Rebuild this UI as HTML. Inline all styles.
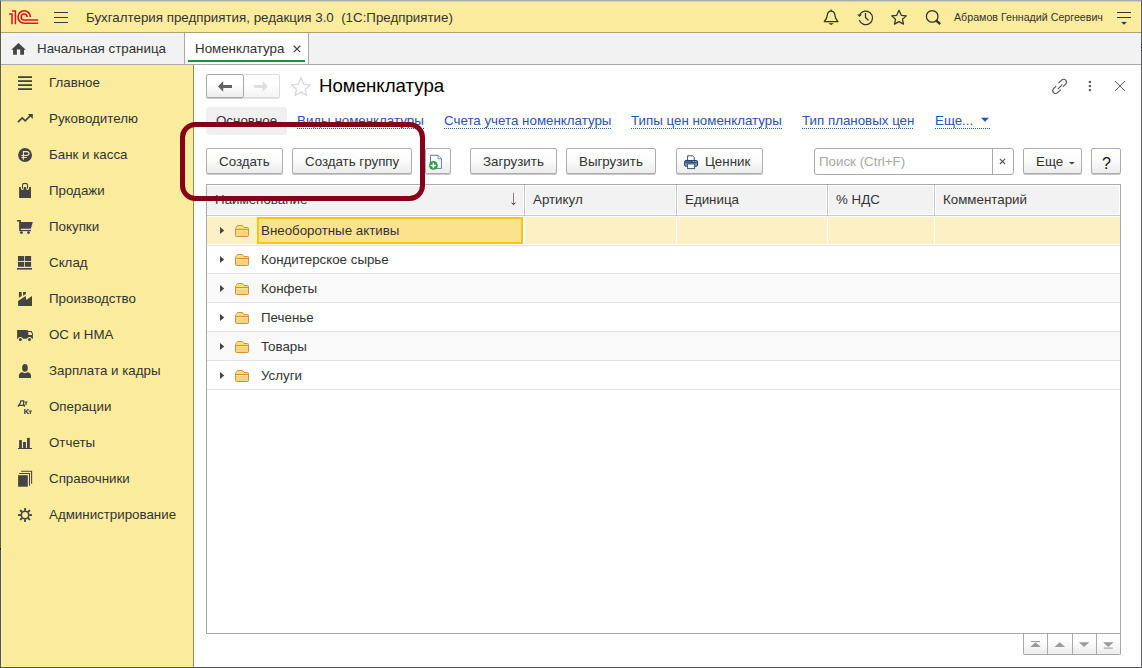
<!DOCTYPE html>
<html><head><meta charset="utf-8">
<style>
*{box-sizing:border-box;margin:0;padding:0}
html,body{width:1142px;height:668px;overflow:hidden;background:#fff}
body{font-family:"Liberation Sans",sans-serif;font-size:13.333px;color:#333;position:relative}
.a{position:absolute}
.t{position:absolute;white-space:pre;line-height:16px;padding-top:1px}
#frame{position:absolute;left:0;top:0;width:1142px;height:668px;border-top:1px solid #aaaaaa;border-left:1px solid #5b5950;border-right:1px solid #606168;border-bottom:1px solid #505054;pointer-events:none;z-index:50}
#hdr{position:absolute;left:0;top:0;width:1142px;height:33px;background:#fbec9d;border-bottom:1px solid #ada170}
#tabs{position:absolute;left:0;top:33px;width:1142px;height:32px;background:#f2f2f2;border-bottom:1px solid #a9a9a9}
#side{position:absolute;left:0;top:65px;width:194px;height:603px;background:#fbec9d;border-right:1px solid #978d60}
.btn{position:absolute;top:148px;height:26px;border:1px solid #adadad;border-radius:2px;background:linear-gradient(#fff 0%,#fdfdfd 40%,#ececec 100%);box-shadow:0 1px 0 #c9c9c9}
.lnk{position:absolute;top:112px;white-space:pre;line-height:16px;padding-top:1px;color:#2853b8;background-image:linear-gradient(to right,#2853b8 50%,transparent 50%);background-size:2px 1px;background-repeat:repeat-x;background-position:0 16px;height:17px}
.hc{position:absolute;top:185px;height:30px;background:#f2f2f2;border-left:1px solid #fff;border-right:1px solid #fff;border-top:1px solid #fff;border-bottom:1px solid #fff}
.sep{position:absolute;top:185px;width:1px;height:30px;background:#cbcbcb}
.rowline{position:absolute;left:207px;width:913px;height:1px;background:#e2e2e2}
.ic{position:absolute}
</style></head><body>
<!-- HEADER -->
<div id="hdr">
  <svg class="a" style="left:0;top:0" width="44" height="33" viewBox="0 0 44 33">
    <g fill="none" stroke="#d9141d" stroke-width="1.55" stroke-linejoin="miter">
      <path d="M9.2 13.9H12V24.2M12 10.9H15.4V24.2"/>
      <path d="M30.4 17A6.2 6.2 0 1 0 24.2 23.2H38.2"/>
      <path d="M27.2 17A3 3 0 1 0 24.2 20H38.2"/>
    </g>
  </svg>
  <div class="a" style="left:54px;top:12px;width:14px;height:1.4px;background:#3a3a3a"></div>
  <div class="a" style="left:54px;top:17px;width:14px;height:1.4px;background:#3a3a3a"></div>
  <div class="a" style="left:54px;top:22px;width:14px;height:1.4px;background:#3a3a3a"></div>
  <div class="t" style="left:86px;top:9px">Бухгалтерия предприятия, редакция 3.0  (1С:Предприятие)</div>
  <!-- bell -->
  <svg class="a" style="left:820px;top:6px" width="22" height="22" viewBox="0 0 22 22">
    <g fill="none" stroke="#333" stroke-width="1.25">
      <path d="M4.3 15.5C6.3 13.6 7 12 7.2 9.6C7.5 6.6 9 5.2 11.1 5.2C13.2 5.2 14.7 6.6 15 9.6C15.2 12 15.9 13.6 17.9 15.5Z" stroke-linejoin="round"/>
      <path d="M11.1 3.6V5.2"/>
    </g>
    <path d="M8.3 17.3H13.9L11.1 19.1Z" fill="#333"/>
  </svg>
  <!-- history -->
  <svg class="a" style="left:854px;top:6px" width="22" height="22" viewBox="0 0 22 22">
    <g fill="none" stroke="#333" stroke-width="1.25">
      <path d="M5.3 14.1A6.8 6.8 0 1 0 5.6 8.9"/>
      <path d="M11.5 7.1V11.5L14.5 14.5"/>
    </g>
    <path d="M3.1 8.4H7.9L5.5 11Z" fill="#333"/>
  </svg>
  <!-- star -->
  <svg class="a" style="left:888px;top:6px" width="22" height="22" viewBox="0 0 22 22">
    <path d="M11 4.3L13.3 9.3L18.3 9.9L14.5 13.3L15.5 18.1L11 15.6L6.5 18.1L7.5 13.3L3.7 9.9L8.7 9.3Z" fill="none" stroke="#333" stroke-width="1.25" stroke-linejoin="round"/>
  </svg>
  <!-- search -->
  <svg class="a" style="left:922px;top:6px" width="22" height="22" viewBox="0 0 22 22">
    <circle cx="10.2" cy="10.4" r="5.8" fill="none" stroke="#333" stroke-width="1.3"/>
    <path d="M14.4 14.6L18.2 18.2" stroke="#333" stroke-width="2.4"/>
  </svg>
  <div class="t" style="left:954px;top:8px;font-size:10.667px">Абрамов Геннадий Сергеевич</div>
  <div class="a" style="left:1117px;top:12px;width:14px;height:1.4px;background:#333"></div>
  <div class="a" style="left:1117px;top:17px;width:14px;height:1.4px;background:#333"></div>
  <svg class="a" style="left:1120px;top:21px" width="8" height="5" viewBox="0 0 8 5"><path d="M1.2 1H6.9L4 3.8Z" fill="#333"/></svg>
</div>
<!-- TABS -->
<div id="tabs">
  <svg class="a" style="left:0;top:0" width="32" height="31" viewBox="0 0 32 31">
    <path d="M11.3 16.7L18.45 9.9L25.8 16.7H24V21.8H20.2V16.4H16.9V21.8H13.1V16.7Z" fill="#444"/>
  </svg>
  <div class="t" style="left:37px;top:7px">Начальная страница</div>
  <div class="a" style="left:184px;top:0;width:125px;height:31px;background:#fff;border-left:1px solid #a9a9a9;border-right:1px solid #a9a9a9"></div>
  <div class="t" style="left:195px;top:7px">Номенклатура</div>
  <svg class="a" style="left:292px;top:11px" width="10" height="10" viewBox="0 0 10 10"><path d="M1.7 1.7L8.2 8.1M8.2 1.7L1.7 8.1" stroke="#444" stroke-width="1.2"/></svg>
  <div class="a" style="left:188px;top:27px;width:117px;height:2px;background:#0b9a3c"></div>
</div>
<!-- SIDEBAR -->
<div id="side">
</div>
<div class="t" style="left:49px;top:74px">Главное</div>
<div class="t" style="left:49px;top:110px">Руководителю</div>
<div class="t" style="left:49px;top:146px">Банк и касса</div>
<div class="t" style="left:49px;top:182px">Продажи</div>
<div class="t" style="left:49px;top:218px">Покупки</div>
<div class="t" style="left:49px;top:254px">Склад</div>
<div class="t" style="left:49px;top:290px">Производство</div>
<div class="t" style="left:49px;top:326px">ОС и НМА</div>
<div class="t" style="left:49px;top:362px">Зарплата и кадры</div>
<div class="t" style="left:49px;top:398px">Операции</div>
<div class="t" style="left:49px;top:434px">Отчеты</div>
<div class="t" style="left:49px;top:470px">Справочники</div>
<div class="t" style="left:49px;top:506px">Администрирование</div>
<svg class="a" style="left:0;top:65px" width="193" height="470" viewBox="0 65 193 470">
  <g fill="#444">
    <!-- Главное -->
    <rect x="18" y="76.2" width="14" height="1.8"/><rect x="18" y="80.2" width="14" height="1.8"/><rect x="18" y="84.2" width="14" height="1.8"/><rect x="18" y="88.2" width="14" height="1.8"/>
    <!-- ruble -->
    <circle cx="25.05" cy="155.05" r="6.95"/>
    <!-- bag -->
    <path d="M19.1 187.1H20.8V188C20.8 189.3 21.6 190 22.5 190C23.4 190 23.9 189.3 23.9 188V187.1H26.1V188C26.1 189.3 26.6 190 27.5 190C28.4 190 29.2 189.3 29.2 188V187.1H31V198H19.1Z"/>
    <!-- cart -->
    <rect x="17.1" y="220" width="3.6" height="1.6"/><rect x="19.3" y="220" width="1.5" height="11"/><path d="M19.3 222.1H32.8L30.9 228.7H19.3Z"/><rect x="19.3" y="229.9" width="11.7" height="1.2"/>
    <circle cx="21.4" cy="232.6" r="1.45"/><circle cx="28.5" cy="232.6" r="1.45"/>
    <!-- grid -->
    <rect x="18" y="256" width="6.2" height="5.1"/><rect x="25" y="256" width="6.1" height="5.1"/>
    <rect x="18" y="262" width="6.2" height="4.8"/><rect x="25" y="262" width="6.1" height="4.8"/>
    <rect x="17" y="268" width="15" height="1.6"/>
    <!-- factory -->
    <path d="M18.1 300.9L25.7 296.1L26.2 300L32 296.1V306H18.1Z"/>
    <path d="M18.9 292.1H21.7V296.1L18.9 297.7Z"/><path d="M23.05 292.1H25.9V294L23.05 295.7Z"/>
    <!-- truck -->
    <path d="M17.1 330.1H27.7V331.1H31.6L32.9 333.3V338.7H17.1Z"/>
    <!-- person -->
    <ellipse cx="24.95" cy="367.9" rx="2.85" ry="3.8"/>
    <path d="M18.9 378V375.5C18.9 373.6 20.3 372.3 22.3 372.3L24.95 373.2L27.6 372.3C29.6 372.3 31 373.6 31 375.5V378Z"/>
    <!-- reports -->
    <rect x="19.1" y="440.1" width="2.8" height="8"/><rect x="23.05" y="442" width="2.85" height="6"/><rect x="27" y="437.9" width="2.8" height="10.1"/>
    <rect x="18" y="448" width="14" height="1"/>
    <!-- справочники -->
    <rect x="18.1" y="475.2" width="9.7" height="11.5"/>
  </g>
  <g fill="#fbec9d">
    <path d="M28.3 332.1H30.9L32 334V334.9H28.3Z"/>
    <circle cx="20.4" cy="339.5" r="2.5"/><circle cx="29.5" cy="339.5" r="2.5"/>
  </g>
  <g fill="#444"><circle cx="20.4" cy="339.5" r="1.5"/><circle cx="29.5" cy="339.5" r="1.5"/></g>
  <g fill="none" stroke="#fbec9d" stroke-width="1.1">
    <path d="M23.4 159.8V151.6H26.6C28.2 151.6 29 152.6 29 153.6C29 154.7 28.2 155.5 26.6 155.5H21.4M21.4 157.5H26.7"/>
  </g>
  <g fill="none" stroke="#444">
    <path d="M22.5 188.7V185C22.5 183.8 23.3 183.4 25 183.4C26.7 183.4 27.5 183.8 27.5 185V188.7" stroke-width="1.1"/>
    <path d="M17.9 122.2L22.2 117.9L25.2 120.9L30.4 115.6" stroke-width="1.7"/>
    <path d="M19.1 473.5H29.5V485.8M21.1 471.3H31.6V483.8" stroke-width="1.05"/>
  </g>
  <path d="M27.8 113.9H32.8V118.9Z" fill="#444"/>
  <g fill="none" stroke="#444" stroke-width="1.25">
    <path d="M18.9 405.4C19.9 404.2 20.6 402.4 20.9 400.9H23.6V405.4"/>
    <path d="M18.4 406.8V405.4H24.4V406.8"/>
  </g>
  <path d="M24.4 401.4H27.6V402.5H26.6V405H25.4V402.5H24.4Z" fill="#444"/>
  <path d="M24.2 409H25.5V411.2L27.6 409H29.2L26.9 411.3L29.3 414H27.6L25.5 411.8V414H24.2Z" fill="#444"/>
  <path d="M28.6 410.5H32V411.6H30.9V414H29.7V411.6H28.6Z" fill="#444"/>
  <!-- gear -->
  <g transform="translate(25.03 515.03)">
    <circle r="3.75" fill="none" stroke="#444" stroke-width="1.6"/>
    <g fill="#444">
      <path d="M-1.05 -4.2L-0.85 -7H0.85L1.05 -4.2Z"/>
      <path d="M-1.05 -4.2L-0.85 -7H0.85L1.05 -4.2Z" transform="rotate(45)"/>
      <path d="M-1.05 -4.2L-0.85 -7H0.85L1.05 -4.2Z" transform="rotate(90)"/>
      <path d="M-1.05 -4.2L-0.85 -7H0.85L1.05 -4.2Z" transform="rotate(135)"/>
      <path d="M-1.05 -4.2L-0.85 -7H0.85L1.05 -4.2Z" transform="rotate(180)"/>
      <path d="M-1.05 -4.2L-0.85 -7H0.85L1.05 -4.2Z" transform="rotate(225)"/>
      <path d="M-1.05 -4.2L-0.85 -7H0.85L1.05 -4.2Z" transform="rotate(270)"/>
      <path d="M-1.05 -4.2L-0.85 -7H0.85L1.05 -4.2Z" transform="rotate(315)"/>
    </g>
  </g>
</svg>

<!-- FORM HEADER -->
<div class="a" style="left:206px;top:74px;width:38px;height:24px;border:1px solid #a8a8a8;border-radius:2px;background:linear-gradient(#fff 40%,#ededed);box-shadow:0 1px 0 #ccc"></div>
<div class="a" style="left:244px;top:74px;width:36px;height:24px;border:1px solid #dadada;border-left:none;border-radius:0 2px 2px 0;background:linear-gradient(#fff 40%,#f4f4f4);box-shadow:0 1px 0 #e2e2e2"></div>
<svg class="a" style="left:206px;top:74px" width="74" height="24" viewBox="206 74 74 24">
  <path d="M218 86.4L223.2 81.1V84.9H232V88H223.2V91.7Z" fill="#626262"/>
  <path d="M267.8 86.4L262.6 81.1V84.9H254V88H262.6V91.7Z" fill="#dedede"/>
</svg>
<svg class="a" style="left:288px;top:74px" width="26" height="26" viewBox="288 74 26 26">
  <path transform="translate(300.9 86.6) scale(1.27) translate(-11 -11.2)" d="M11 4.3L13.3 9.3L18.3 9.9L14.5 13.3L15.5 18.1L11 15.6L6.5 18.1L7.5 13.3L3.7 9.9L8.7 9.3Z" fill="none" stroke="#d9d9d9" stroke-width="1.05" stroke-linejoin="round"/>
</svg>
<div class="t" style="left:319px;top:73.5px;font-size:18.667px;line-height:22px;color:#000">Номенклатура</div>
<svg class="a" style="left:1046px;top:74px" width="90" height="24" viewBox="1046 74 90 24">
  <g fill="none" stroke="#555" stroke-width="1.3" stroke-linecap="round" transform="translate(1059.35 86.4) scale(0.85) translate(-1059 -86.5)">
    <path d="M1058.4 82.2L1061.6 79.1C1063 77.8 1065.2 77.8 1066.4 79.1C1067.6 80.4 1067.6 82.5 1066.3 83.8L1063.6 86.5"/>
    <path d="M1060.2 90.8L1057 93.9C1055.6 95.2 1053.4 95.2 1052.2 93.9C1051 92.6 1051 90.5 1052.3 89.2L1055 86.5"/>
    <path d="M1057.5 89.3L1062.1 84.7"/>
  </g>
  <g fill="#555"><circle cx="1089.9" cy="81.9" r="1.2"/><circle cx="1089.9" cy="86" r="1.2"/><circle cx="1089.9" cy="90.1" r="1.2"/></g>
  <path d="M1115 81L1125 91M1125 81L1115 91" stroke="#5a5a5a" stroke-width="1"/>
</svg>

<!-- LINKS ROW -->
<div class="a" style="left:206px;top:107px;width:81px;height:28px;background:#f0f0f0;border-radius:3px"></div>
<div class="t" style="left:216px;top:112px">Основное</div>
<div class="lnk" style="left:297px">Виды номенклатуры</div>
<div class="lnk" style="left:444px">Счета учета номенклатуры</div>
<div class="lnk" style="left:631px">Типы цен номенклатуры</div>
<div class="lnk" style="left:802px">Тип плановых цен</div>
<div class="lnk" style="left:935px;width:55px">Еще...</div>
<svg class="a" style="left:980px;top:117px" width="10" height="8" viewBox="0 0 10 8"><path d="M1 0.8H9L5 4.8Z" fill="#2452b8"/></svg>

<!-- BUTTON ROW -->
<div class="btn" style="left:206px;width:77px"></div>
<div class="t" style="left:219px;top:153px">Создать</div>
<div class="btn" style="left:292px;width:120px"></div>
<div class="t" style="left:305px;top:153px">Создать группу</div>
<div class="btn" style="left:425px;width:26px"></div>
<svg class="a" style="left:425px;top:148px" width="26" height="27" viewBox="425 148 26 27">
  <path d="M430.5 155.3H438.2L441.4 158.5V168.4H430.5Z" fill="#fff" stroke="#6b7d96" stroke-width="1"/>
  <path d="M438 155.3V158.7H441.4" fill="#fff" stroke="#6b7d96" stroke-width="0.9"/>
  <circle cx="433.4" cy="165.4" r="4.3" fill="#1d9d3a"/>
  <path d="M433.4 162.6V168.2M430.6 165.4H436.2" stroke="#fff" stroke-width="1.5"/>
</svg>
<div class="btn" style="left:470px;width:87px"></div>
<div class="t" style="left:483px;top:153px">Загрузить</div>
<div class="btn" style="left:566px;width:90px"></div>
<div class="t" style="left:579px;top:153px">Выгрузить</div>
<div class="btn" style="left:676px;width:87px"></div>
<svg class="a" style="left:680px;top:150px" width="24" height="24" viewBox="680 150 24 24">
  <defs><linearGradient id="pg" x1="0" y1="0" x2="0" y2="1"><stop offset="0" stop-color="#3d6897"/><stop offset="1" stop-color="#8fb0d4"/></linearGradient></defs>
  <path d="M687.6 160.5V155.8H692.6L694.2 157.4V160.5" fill="#fff" stroke="#3e5670" stroke-width="1"/>
  <rect x="684.6" y="160.5" width="13" height="5.8" rx="1.3" fill="url(#pg)" stroke="#23456b" stroke-width="1"/>
  <path d="M686 162.3H696.2" stroke="#23456b" stroke-width="0.9"/>
  <circle cx="693.6" cy="161.6" r="0.45" fill="#fff"/><circle cx="695.5" cy="161.6" r="0.45" fill="#fff"/>
  <rect x="687.6" y="163.9" width="7" height="4.7" fill="#fff" stroke="#3e5670" stroke-width="1"/>
</svg>
<div class="t" style="left:705px;top:153px">Ценник</div>

<div class="a" style="left:814px;top:148px;width:200px;height:27px;border:1px solid #a9a9a9;border-radius:3px;background:#fff"></div>
<div class="a" style="left:992px;top:149px;width:1px;height:25px;background:#a9a9a9"></div>
<div class="t" style="left:819px;top:153px;color:#a8a8a8">Поиск (Ctrl+F)</div>
<svg class="a" style="left:996px;top:155px" width="12" height="12" viewBox="0 0 12 12"><path d="M3.9 3.8L9.1 9M9.1 3.8L3.9 9" stroke="#555" stroke-width="1.1"/></svg>
<div class="btn" style="left:1023px;width:59px"></div>
<div class="t" style="left:1036px;top:153px">Еще</div>
<svg class="a" style="left:1066px;top:159px" width="12" height="8" viewBox="0 0 12 8"><path d="M2.8 3H8.9L5.85 5.6Z" fill="#444"/></svg>
<div class="btn" style="left:1091px;width:30px"></div>
<div class="t" style="left:1102px;top:154px;font-size:16px;line-height:18px;color:#111">?</div>

<!-- ANNOTATION -->
<svg class="a" style="left:0;top:0;z-index:40" width="1142" height="668" viewBox="0 0 1142 668">
  <rect x="182.5" y="124.5" width="240" height="74" rx="13" fill="none" stroke="#850018" stroke-width="5"/>
</svg>

<!-- TABLE -->
<div class="a" style="left:206px;top:184px;width:915px;height:450px;border:1px solid #a9a9a9;background:#fff"></div>
<div class="a" style="left:207px;top:185px;width:913px;height:30px;background:#f2f2f2"></div>
<div class="a" style="left:207px;top:185px;width:913px;height:1px;background:#fff"></div>
<div class="a" style="left:207px;top:214px;width:913px;height:1px;background:#fff"></div>
<div class="a" style="left:207px;top:215px;width:913px;height:1px;background:#c9c9c9"></div>
<div class="a" style="left:523px;top:185px;width:3px;height:30px;background:#fff"></div><div class="sep" style="left:524px"></div>
<div class="a" style="left:675px;top:185px;width:3px;height:30px;background:#fff"></div><div class="sep" style="left:676px"></div>
<div class="a" style="left:826px;top:185px;width:3px;height:30px;background:#fff"></div><div class="sep" style="left:827px"></div>
<div class="a" style="left:933px;top:185px;width:3px;height:30px;background:#fff"></div><div class="sep" style="left:934px"></div>
<div class="a" style="left:1119px;top:185px;width:1px;height:30px;background:#fff"></div>
<div class="t" style="left:215px;top:191px">Наименование</div>
<svg class="a" style="left:508px;top:190px" width="12" height="18" viewBox="0 0 12 18"><path d="M5.5 2.8V14.6" stroke="#8a7a7a" stroke-width="1"/><path d="M3.6 12.6L5.5 14.8L7.4 12.6" fill="none" stroke="#333" stroke-width="1"/></svg>
<div class="t" style="left:533px;top:191px">Артикул</div>
<div class="t" style="left:685px;top:191px">Единица</div>
<div class="t" style="left:836px;top:191px">% НДС</div>
<div class="t" style="left:943px;top:191px">Комментарий</div>

<!-- rows -->
<div class="a" style="left:207px;top:217px;width:316px;height:27px;background:#fdf0c5"></div>
<div class="a" style="left:525px;top:217px;width:151px;height:27px;background:#fdf0c5"></div>
<div class="a" style="left:677px;top:217px;width:150px;height:27px;background:#fdf0c5"></div>
<div class="a" style="left:828px;top:217px;width:106px;height:27px;background:#fdf0c5"></div>
<div class="a" style="left:935px;top:217px;width:185px;height:27px;background:#fdf0c5"></div>
<div class="a" style="left:257px;top:217px;width:266px;height:27px;background:#fde28d;border:2px solid #f8c60f"></div>
<div class="rowline" style="top:245px"></div>
<div class="a" style="left:207px;top:274px;width:913px;height:28px;background:#f9f9f9"></div>
<div class="rowline" style="top:273px"></div>
<div class="rowline" style="top:302px"></div>
<div class="a" style="left:207px;top:332px;width:913px;height:28px;background:#f9f9f9"></div>
<div class="rowline" style="top:331px"></div>
<div class="rowline" style="top:360px"></div>
<div class="rowline" style="top:389px"></div>

<svg class="a" style="left:207px;top:216px" width="50" height="174" viewBox="207 216 50 174">
  <defs>
    <g id="exp"><path d="M0 0L4.2 3.5L0 7Z" fill="#444"/></g>
    <g id="fold">
      <path d="M0.5 3.5L2.5 0.5H7.5L9 2.5H12.5Q13.5 2.5 13.5 3.5V10.5Q13.5 11.5 12.5 11.5H1.5Q0.5 11.5 0.5 10.5Z" fill="#f6d57b" stroke="#d0913c" stroke-width="1"/>
      <path d="M1.1 3.6L2.8 1.1H7.2L8.6 3.1H12.9V4H1.1Z" fill="#fee36d"/>
      <path d="M1 5.5H13" stroke="#fbe596" stroke-width="1"/>
      <path d="M0.5 4.5H13.5" stroke="#d0913c" stroke-width="1"/>
    </g>
  </defs>
  <use href="#exp" x="220" y="227"/><use href="#fold" x="235" y="225"/>
  <use href="#exp" x="220" y="256"/><use href="#fold" x="235" y="254"/>
  <use href="#exp" x="220" y="285"/><use href="#fold" x="235" y="283"/>
  <use href="#exp" x="220" y="314"/><use href="#fold" x="235" y="312"/>
  <use href="#exp" x="220" y="343"/><use href="#fold" x="235" y="341"/>
  <use href="#exp" x="220" y="372"/><use href="#fold" x="235" y="370"/>
</svg>
<div class="t" style="left:261px;top:222px">Внеоборотные активы</div>
<div class="t" style="left:261px;top:251px">Кондитерское сырье</div>
<div class="t" style="left:261px;top:280px">Конфеты</div>
<div class="t" style="left:261px;top:309px">Печенье</div>
<div class="t" style="left:261px;top:338px">Товары</div>
<div class="t" style="left:261px;top:367px">Услуги</div>

<!-- nav buttons -->
<div class="a" style="left:1023px;top:634px;width:98px;height:21px;border:1px solid #a9a9a9;border-top:none;border-radius:0 0 2px 2px;background:linear-gradient(#fff 30%,#ececec)"></div>
<div class="a" style="left:1047px;top:634px;width:1px;height:20px;background:#a9a9a9"></div>
<div class="a" style="left:1072px;top:634px;width:1px;height:20px;background:#a9a9a9"></div>
<div class="a" style="left:1096px;top:634px;width:1px;height:20px;background:#a9a9a9"></div>
<svg class="a" style="left:1023px;top:633px" width="98" height="22" viewBox="1023 633 98 22">
  <g fill="#9a9a9a">
    <rect x="1031" y="641" width="9" height="1"/><path d="M1030.2 646.9L1035.5 642.2L1040.8 646.9Z"/>
    <path d="M1054.5 646.9L1059.8 642.2L1065.1 646.9Z"/>
    <path d="M1078.8 642.2L1084.1 646.9L1089.4 642.2Z"/>
    <path d="M1103 642.2L1108.3 646.9L1113.6 642.2Z"/><rect x="1103.8" y="647.6" width="9" height="1"/>
  </g>
</svg>

<div class="a" style="left:1px;top:1px;width:1140px;height:1px;background:#cfd0d5;z-index:49"></div>
<div class="a" style="left:1px;top:2px;width:1px;height:30px;background:#fff39f;z-index:49"></div>
<div class="a" style="left:1140px;top:2px;width:1px;height:30px;background:#fff39f;z-index:49"></div>
<div class="a" style="left:1px;top:65px;width:1px;height:602px;background:#fff39f;z-index:49"></div>
<div class="a" style="left:1px;top:666px;width:192px;height:1px;background:#fff39f;z-index:49"></div>
<div id="frame"></div>
<div class="a" style="left:0;top:548px;width:1px;height:119px;background:#4f5366;z-index:51"></div>
<div class="a" style="left:0;top:548px;width:1px;height:2px;background:#1e1e22;z-index:51"></div>
<div class="a" style="left:1141px;top:44px;width:1px;height:1px;background:#111;z-index:51"></div>
<div class="a" style="left:1141px;top:47px;width:1px;height:1px;background:#111;z-index:51"></div>
<div class="a" style="left:1141px;top:50px;width:1px;height:1px;background:#111;z-index:51"></div>
</body></html>
